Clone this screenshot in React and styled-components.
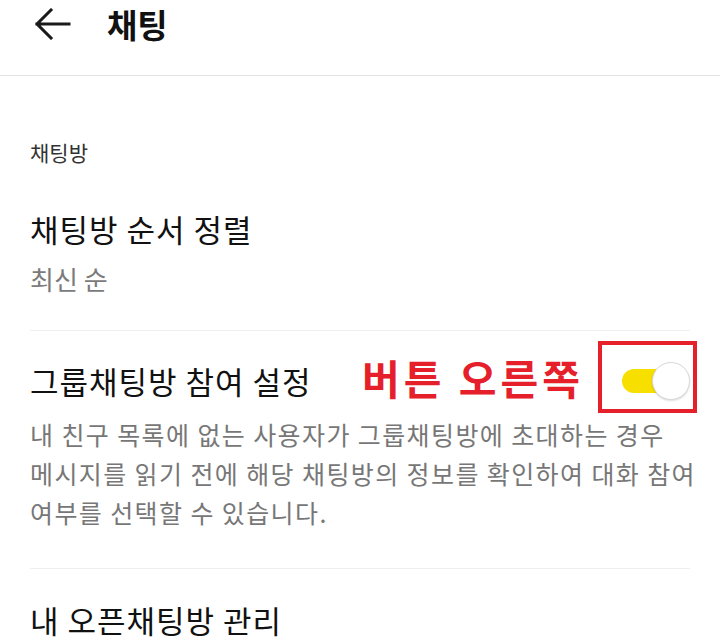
import styled, { createGlobalStyle } from "styled-components";

const Global = createGlobalStyle`
  html, body {
    margin: 0;
    padding: 0;
    background: #fff;
  }
  body {
    font-family: "Noto Sans CJK KR", "Noto Sans", sans-serif;
  }
`;

const Page = styled.div`
  width: 720px;
  height: 644px;
  overflow: hidden;
  background: #fff;
`;

const Header = styled.header`
  height: 75px;
  display: flex;
  align-items: flex-start;
  padding-left: 34px;
  border-bottom: 1px solid #e4e4e4;
`;

const BackButton = styled.button`
  border: none;
  background: none;
  padding: 0;
  margin-top: 8px;
  width: 37px;
  height: 32px;
  display: flex;
  align-items: center;
  cursor: pointer;
`;

const Title = styled.h1`
  margin: 2px 0 0 36px;
  font-size: 33px;
  line-height: 44px;
  font-weight: 700;
  color: #111;
`;

const Content = styled.div`
  padding-left: 30px;
  padding-right: 30px;
`;

const SectionLabel = styled.div`
  font-size: 21px;
  color: #333;
  margin-top: 63px;
  line-height: 26px;
`;

const Row = styled.div`
  padding: ${(p) => p.$pad || "0"};
  border-bottom: ${(p) => (p.$last ? "none" : "1px solid #efefef")};
`;

const RowHead = styled.div`
  height: 72px;
  display: flex;
  align-items: center;
`;

const RowTitle = styled.div`
  font-size: 31px;
  color: #111;
  line-height: 40px;
  letter-spacing: 1px;
  margin-top: ${(p) => p.$mt || "0"};
`;

const SubText = styled.div`
  font-size: 26px;
  color: #7b7b7b;
  line-height: 36px;
  margin-top: ${(p) => p.$mt || "0"};
`;

const Desc = styled.div`
  font-size: 25px;
  color: #777;
  line-height: 39px;
  letter-spacing: 1.4px;
  white-space: nowrap;
  margin-top: 2px;
`;

const Annotation = styled.span`
  margin-left: auto;
  font-size: 41px;
  font-weight: 700;
  color: #e5202b;
  letter-spacing: 4px;
  margin-right: 14px;
`;

const RedBox = styled.div`
  width: 71px;
  height: 64px;
  padding-left: 20px;
  border: 4px solid #e5202b;
  display: flex;
  align-items: center;
  margin-right: -7px;
  box-sizing: content-box;
`;

const Switch = styled.div`
  position: relative;
  width: 68px;
  height: 38px;
  margin-top: 8px;
`;

const Track = styled.div`
  position: absolute;
  left: 0;
  top: 7px;
  width: 56px;
  height: 24px;
  border-radius: 12px;
  background: #f7df00;
`;

const Knob = styled.div`
  position: absolute;
  right: 0;
  top: 0;
  width: 36px;
  height: 36px;
  border-radius: 50%;
  background: #fff;
  border: 1px solid #d9d9d9;
  box-shadow: 0 1px 2px rgba(0, 0, 0, 0.15);
`;

const ArrowIcon = () => (
  <svg width="37" height="32" viewBox="0 0 37 32" fill="none">
    <path
      d="M35 16H3M17 2L3 16l14 14"
      stroke="#1a1a1a"
      strokeWidth="3"
      strokeLinecap="square"
    />
  </svg>
);

export default function App() {
  return (
    <Page>
      <Global />
      <Header>
        <BackButton aria-label="뒤로">
          <ArrowIcon />
        </BackButton>
        <Title>채팅</Title>
      </Header>
      <Content>
        <SectionLabel>채팅방</SectionLabel>
        <Row $pad="44px 0 33px">
          <RowTitle>채팅방 순서 정렬</RowTitle>
          <SubText $mt="12px">최신 순</SubText>
        </Row>
        <Row $pad="10px 0 36px">
          <RowHead>
            <RowTitle $mt="8px">그룹채팅방 참여 설정</RowTitle>
            <Annotation>버튼 오른쪽</Annotation>
            <RedBox>
              <Switch>
                <Track />
                <Knob />
              </Switch>
            </RedBox>
          </RowHead>
          <Desc>
            내 친구 목록에 없는 사용자가 그룹채팅방에 초대하는 경우
            <br />
            메시지를 읽기 전에 해당 채팅방의 정보를 확인하여 대화 참여
            <br />
            여부를 선택할 수 있습니다.
          </Desc>
        </Row>
        <Row $pad="31px 0 0" $last>
          <RowTitle>내 오픈채팅방 관리</RowTitle>
        </Row>
      </Content>
    </Page>
  );
}
